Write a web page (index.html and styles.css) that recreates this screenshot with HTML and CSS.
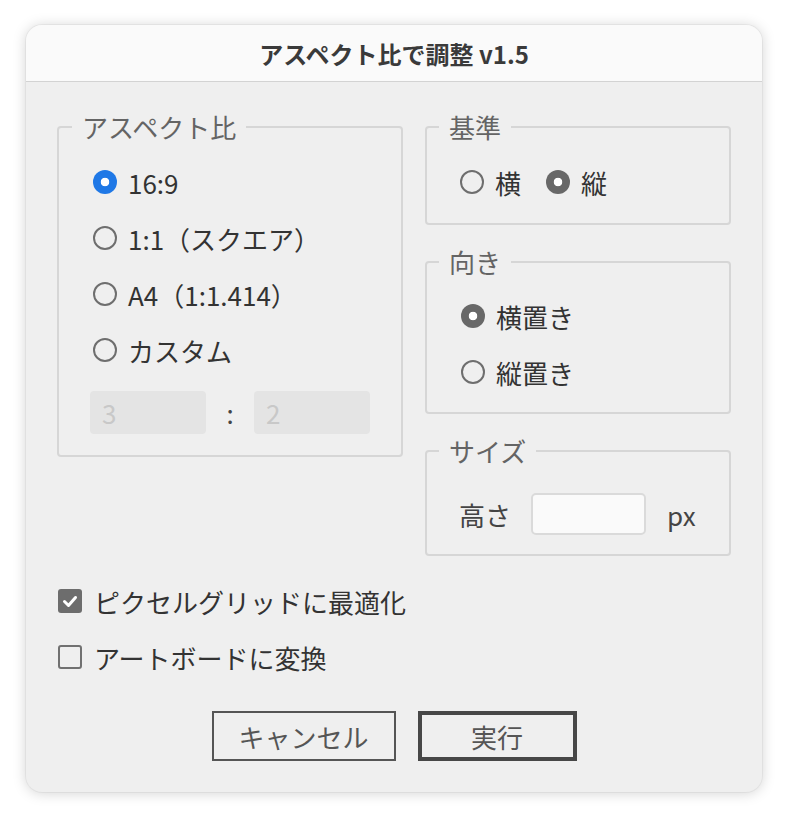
FILE: index.html
```html
<!DOCTYPE html>
<html lang="ja">
<head>
<meta charset="utf-8">
<title>アスペクト比で調整 v1.5</title>
<link rel="stylesheet" href="styles.css">
</head>
<body>
<div class="window">
  <div class="titlebar">アスペクト比で調整 v1.5</div>
  <div class="content">
    <div class="columns">
      <fieldset class="group group-ratio">
        <legend>アスペクト比</legend>
        <div class="opt"><span class="radio on blue"></span><span>16:9</span></div>
        <div class="opt"><span class="radio"></span><span>1:1（スクエア）</span></div>
        <div class="opt"><span class="radio"></span><span>A4（1:1.414）</span></div>
        <div class="opt"><span class="radio"></span><span>カスタム</span></div>
        <div class="custom-row">
          <div class="field disabled">3</div>
          <span class="colon">:</span>
          <div class="field disabled">2</div>
        </div>
      </fieldset>
      <div class="right-col">
        <fieldset class="group group-basis">
          <legend>基準</legend>
          <div class="inline-opts">
            <div class="opt"><span class="radio"></span><span>横</span></div>
            <div class="opt"><span class="radio on"></span><span>縦</span></div>
          </div>
        </fieldset>
        <fieldset class="group group-orient">
          <legend>向き</legend>
          <div class="opt"><span class="radio on"></span><span>横置き</span></div>
          <div class="opt"><span class="radio"></span><span>縦置き</span></div>
        </fieldset>
        <fieldset class="group group-size">
          <legend>サイズ</legend>
          <div class="size-row">
            <span>高さ</span>
            <div class="field white"></div>
            <span>px</span>
          </div>
        </fieldset>
      </div>
    </div>
    <div class="checks">
      <div class="opt check-opt">
        <span class="checkbox on"><svg viewBox="0 0 24 24" width="24" height="24"><polyline points="6.5,12.5 10.5,16.5 17.5,8.5" fill="none" stroke="#fff" stroke-width="3" stroke-linecap="round" stroke-linejoin="round"/></svg></span>
        <span>ピクセルグリッドに最適化</span>
      </div>
      <div class="opt check-opt">
        <span class="checkbox"></span>
        <span>アートボードに変換</span>
      </div>
    </div>
    <div class="buttons">
      <div class="btn cancel">キャンセル</div>
      <div class="btn primary">実行</div>
    </div>
  </div>
</div>
</body>
</html>
```

FILE: styles.css
```css
* { box-sizing: border-box; }
html, body { margin: 0; padding: 0; background: #ffffff; }
body {
  font-family: "Noto Sans CJK JP", "Noto Sans", sans-serif;
  color: #333333;
  width: 789px;
  height: 819px;
  overflow: hidden;
}
.window {
  margin: 25px 0 0 26px;
  width: 736px;
  height: 767px;
  border-radius: 16px;
  background: #efefef;
  overflow: hidden;
  box-shadow: 0 0 0 1px rgba(0,0,0,0.04), 0 1px 14px rgba(0,0,0,0.18);
  display: flex;
  flex-direction: column;
}
.titlebar {
  height: 57px;
  flex: none;
  background: #fafafa;
  border-bottom: 1px solid #d3d3d3;
  display: flex;
  align-items: center;
  justify-content: center;
  font-size: 24px;
  font-weight: 700;
  color: #3a3a3a;
}
.content {
  padding: 30px 31px 31px;
  flex: 1;
  display: flex;
  flex-direction: column;
}
.columns {
  display: flex;
  gap: 22px;
  align-items: flex-start;
}
.group {
  margin: 0;
  min-width: 0;
  border: 2px solid #d6d6d6;
  border-radius: 4px;
}
.group legend {
  padding: 0 10px;
  font-size: 26px;
  line-height: 30px;
  color: #646464;
}
.group-ratio {
  width: 346px;
  padding: 12px 20px 21px 34px;
}
.group-ratio legend { margin-left: -21px; }
.right-col {
  width: 306px;
  display: flex;
  flex-direction: column;
  gap: 22px;
}
.group-basis { padding: 12px 20px 13px 33px; }
.group-basis legend { margin-left: -21px; }
.group-orient { padding: 11px 20px 12px 34px; }
.group-orient legend { margin-left: -22px; }
.group-size { padding: 20px 20px 12px 32px; }
.group-size legend { margin-left: -20px; }
.opt {
  height: 56px;
  display: flex;
  align-items: center;
  gap: 11px;
  font-size: 26px;
  color: #333333;
}
.inline-opts {
  display: flex;
  gap: 25px;
}
.radio {
  width: 24px;
  height: 24px;
  flex: none;
  border-radius: 50%;
  border: 2px solid #6e6e6e;
}
.radio.on {
  border: none;
  background: radial-gradient(circle, #ffffff 0 4px, #686868 4.6px);
}
.radio.on.blue {
  background: radial-gradient(circle, #ffffff 0 4px, #1f78e6 4.6px);
}
.custom-row {
  margin-top: 13px;
  margin-left: -3px;
  display: flex;
  align-items: center;
}
.field {
  height: 43px;
  width: 116px;
  border-radius: 4px;
  font-size: 26px;
  display: flex;
  align-items: center;
}
.field.disabled {
  background: #e4e4e4;
  color: #c8c8c8;
  padding-left: 12px;
}
.colon {
  width: 48px;
  text-align: center;
  font-size: 26px;
  color: #444444;
}
.size-row {
  height: 56px;
  display: flex;
  align-items: center;
  font-size: 26px;
  color: #444444;
}
.field.white {
  width: 115px;
  height: 42px;
  margin: 0 21px 0 20px;
  background: #fafafa;
  border: 2px solid #dadada;
  border-radius: 5px;
}
.checks {
  margin-top: 17px;
  padding-left: 1px;
}
.check-opt { gap: 12px; }
.checkbox {
  width: 24px;
  height: 24px;
  flex: none;
  border-radius: 3px;
  border: 2px solid #717171;
  display: flex;
  align-items: center;
  justify-content: center;
}
.checkbox.on {
  border: none;
  background: #6d6d6d;
}
.checkbox svg { display: block; }
.buttons {
  margin-top: 26px;
  display: flex;
  justify-content: center;
  gap: 22px;
}
.btn {
  height: 50px;
  display: flex;
  align-items: center;
  justify-content: center;
  font-size: 26px;
  color: #555555;
}
.btn.cancel {
  width: 184px;
  border: 2px solid #555555;
}
.btn.primary {
  width: 159px;
  border: 4px solid #474747;
}
```
